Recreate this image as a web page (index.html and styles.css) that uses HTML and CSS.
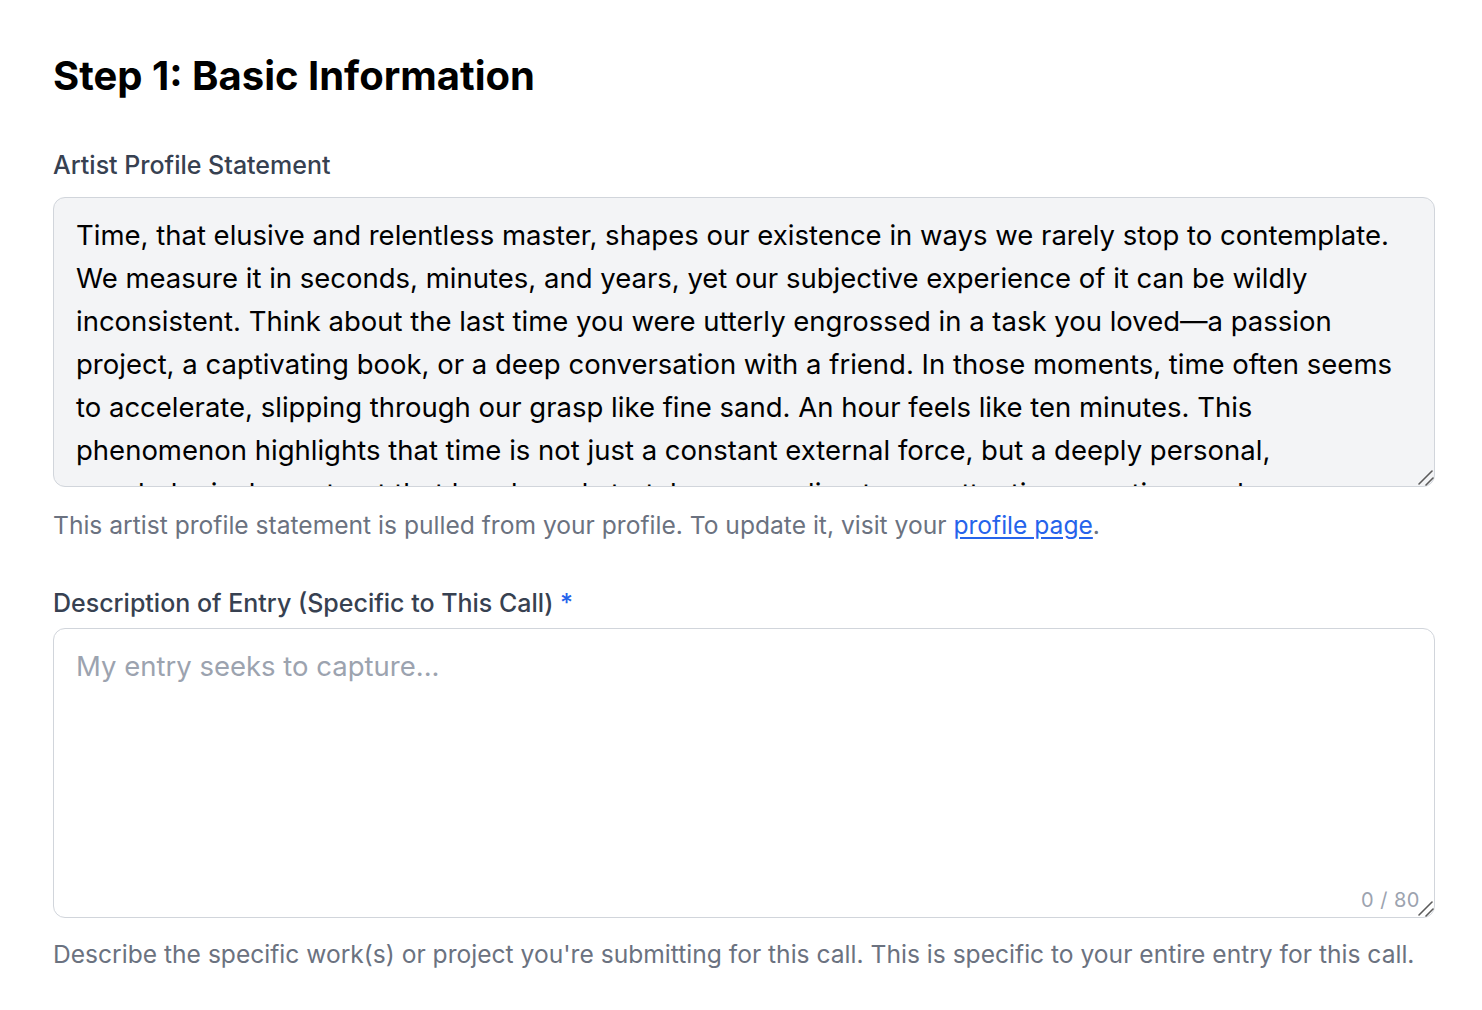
FILE: index.html
```html
<!DOCTYPE html>
<html lang="en">
<head>
<meta charset="utf-8">
<title>Step 1: Basic Information</title>
<link rel="stylesheet" href="styles.css">
</head>
<body>
<main class="page">
  <h1 class="title">Step 1: Basic Information</h1>

  <section class="field">
    <label class="label" for="profile">Artist Profile Statement</label>
    <div class="area-wrap">
      <textarea id="profile" class="area area-readonly" readonly>Time, that elusive and relentless master, shapes our existence in ways we rarely stop to contemplate. We measure it in seconds, minutes, and years, yet our subjective experience of it can be wildly inconsistent. Think about the last time you were utterly engrossed in a task you loved—a passion project, a captivating book, or a deep conversation with a friend. In those moments, time often seems to accelerate, slipping through our grasp like fine sand. An hour feels like ten minutes. This phenomenon highlights that time is not just a constant external force, but a deeply personal, psychological construct that bends and stretches according to our attention, emotion, and memory.</textarea>
      <svg class="grip" width="18" height="18" viewBox="0 0 18 18" aria-hidden="true">
        <path d="M3 16 L16 3" />
        <path d="M10 17 L17 10" />
      </svg>
    </div>
    <p class="help">This artist profile statement is pulled from your profile. To update it, visit your <a class="link" href="#">profile page</a>.</p>
  </section>

  <section class="field field-second">
    <label class="label label-second" for="desc">Description of Entry (Specific to This Call) <span class="req">*</span></label>
    <div class="area-wrap">
      <textarea id="desc" class="area" placeholder="My entry seeks to capture..."></textarea>
      <span class="counter">0 / 80</span>
      <svg class="grip" width="18" height="18" viewBox="0 0 18 18" aria-hidden="true">
        <path d="M3 16 L16 3" />
        <path d="M10 17 L17 10" />
      </svg>
    </div>
    <p class="help help-second">Describe the specific work(s) or project you're submitting for this call. This is specific to your entire entry for this call.</p>
  </section>
</main>
</body>
</html>
```

FILE: styles.css
```css
html, body {
  margin: 0;
  padding: 0;
  background: #ffffff;
}

body {
  font-family: Inter, "Noto Sans", "Liberation Sans", sans-serif;
  color: #111827;
}

.page {
  width: 1382px;
  margin-left: 53px;
  padding-top: 50px;
}

.title {
  margin: 0;
  font-size: 40px;
  line-height: 52px;
  font-weight: 700;
  letter-spacing: 0;
  color: #000000;
}

.field {
  display: flex;
  flex-direction: column;
  margin-top: 46px;
}

.field-second {
  margin-top: 44px;
}

.label {
  font-size: 25px;
  line-height: 34px;
  font-weight: 500;
  color: #374151;
  margin-bottom: 15px;
}

.label-second {
  margin-bottom: 8px;
}

.req {
  color: #2563eb;
}

.area-wrap {
  position: relative;
  display: flex;
}

.area {
  box-sizing: border-box;
  width: 100%;
  height: 290px;
  margin: 0;
  padding: 16px 22px 14px;
  border: 1px solid #d1d5db;
  border-radius: 12px;
  font-family: Inter, "Noto Sans", "Liberation Sans", sans-serif;
  font-size: 27.5px;
  line-height: 43px;
  color: #000000;
  background: #ffffff;
  outline: none;
  resize: vertical;
  display: block;
}

.area::-webkit-resizer {
  background: transparent;
}

.area::placeholder {
  color: #9ca3af;
}

.area-readonly {
  background: #f3f4f6;
  color: #000000;
  overflow: hidden;
}

.grip {
  position: absolute;
  right: 1px;
  bottom: 1px;
  pointer-events: none;
  stroke: #5b5b5b;
  stroke-width: 1.6;
  stroke-linecap: round;
  fill: none;
}

.counter {
  position: absolute;
  right: 15px;
  bottom: 5px;
  font-size: 20px;
  line-height: 26px;
  color: #9ca3af;
  letter-spacing: 0.5px;
}

.help {
  margin: 21px 0 0;
  font-size: 24.6px;
  line-height: 34px;
  color: #6b7280;
}

.help-second {
  margin-top: 19px;
}

.link {
  color: #2563eb;
  text-decoration: underline;
  text-underline-offset: 3px;
}
```
